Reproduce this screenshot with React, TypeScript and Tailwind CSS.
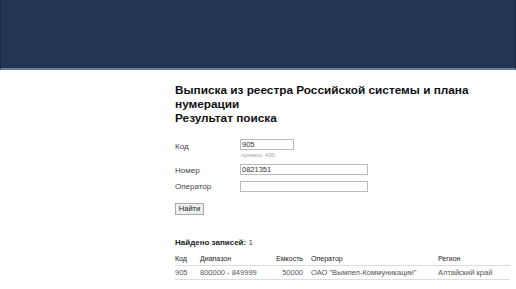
import React from "react";

export default function App() {
  const f = { fontFamily: '"Liberation Sans", Arial, sans-serif' };
  return (
    <div className="w-[516px] h-[289px] bg-white overflow-hidden" style={f}>
      <div className="h-[70px] bg-[#223654] border-l border-r border-[#1a2a42] border-b-2 border-b-[#6b7f9c]" />
      <div className="pl-[175px] pt-[13px] text-[#111]">
        <h1 className="text-[11.8px] font-bold leading-[14px] w-[300px]">
          Выписка из реестра Российской системы и плана нумерации
          <br />
          Результат поиска
        </h1>
        <div className="mt-[14px] text-[8px] text-[#444]">
          <div className="flex">
            <div className="w-[65px] pt-[2px]">Код</div>
            <div>
              <div className="w-[54px] h-[11px] border border-[#bbb] text-[7.5px] leading-[9px] pl-[1px] text-[#333]">905</div>
              <div className="text-[6px] text-[#aaa] pl-[1px] mt-[1px]">пример: 495</div>
            </div>
          </div>
          <div className="flex mt-[4px]">
            <div className="w-[65px] pt-[1px]">Номер</div>
            <div className="w-[128px] h-[11px] border border-[#bbb] text-[7.5px] leading-[9px] pl-[1px] text-[#333]">0821351</div>
          </div>
          <div className="flex mt-[4px]">
            <div className="w-[65px]">Оператор</div>
            <div className="w-[128px] h-[11px] border border-[#bbb]" />
          </div>
          <div className="mt-[10px]">
            <div className="inline-block w-[29px] h-[12px] border border-[#aaa] bg-[#eee] text-[7.5px] leading-[10px] text-center text-[#222]">Найти</div>
          </div>
        </div>
        <div className="mt-[22px] text-[8px]">
          <span className="font-bold text-[#222]">Найдено записей:</span> <span className="text-[#444]">1</span>
        </div>
        <div className="mt-[7px] w-[335px] text-[7px] text-[#444]">
          <div className="flex h-[8px] items-end text-[#222] border-b border-[#ddd] pb-[1px] box-content">
            <div className="w-[25px]">Код</div>
            <div className="w-[74px]">Диапазон</div>
            <div className="w-[29px] text-right">Емкость</div>
            <div className="w-[8px]" />
            <div className="w-[127px]">Оператор</div>
            <div>Регион</div>
          </div>
          <div className="flex h-[14px] items-center border-b border-[#ddd] text-[7.5px] text-[#555]">
            <div className="w-[25px]">905</div>
            <div className="w-[74px]">800000 - 849999</div>
            <div className="w-[29px] text-right">50000</div>
            <div className="w-[8px]" />
            <div className="w-[127px]">ОАО "Вымпел-Коммуникации"</div>
            <div>Алтайский край</div>
          </div>
        </div>
      </div>
    </div>
  );
}
